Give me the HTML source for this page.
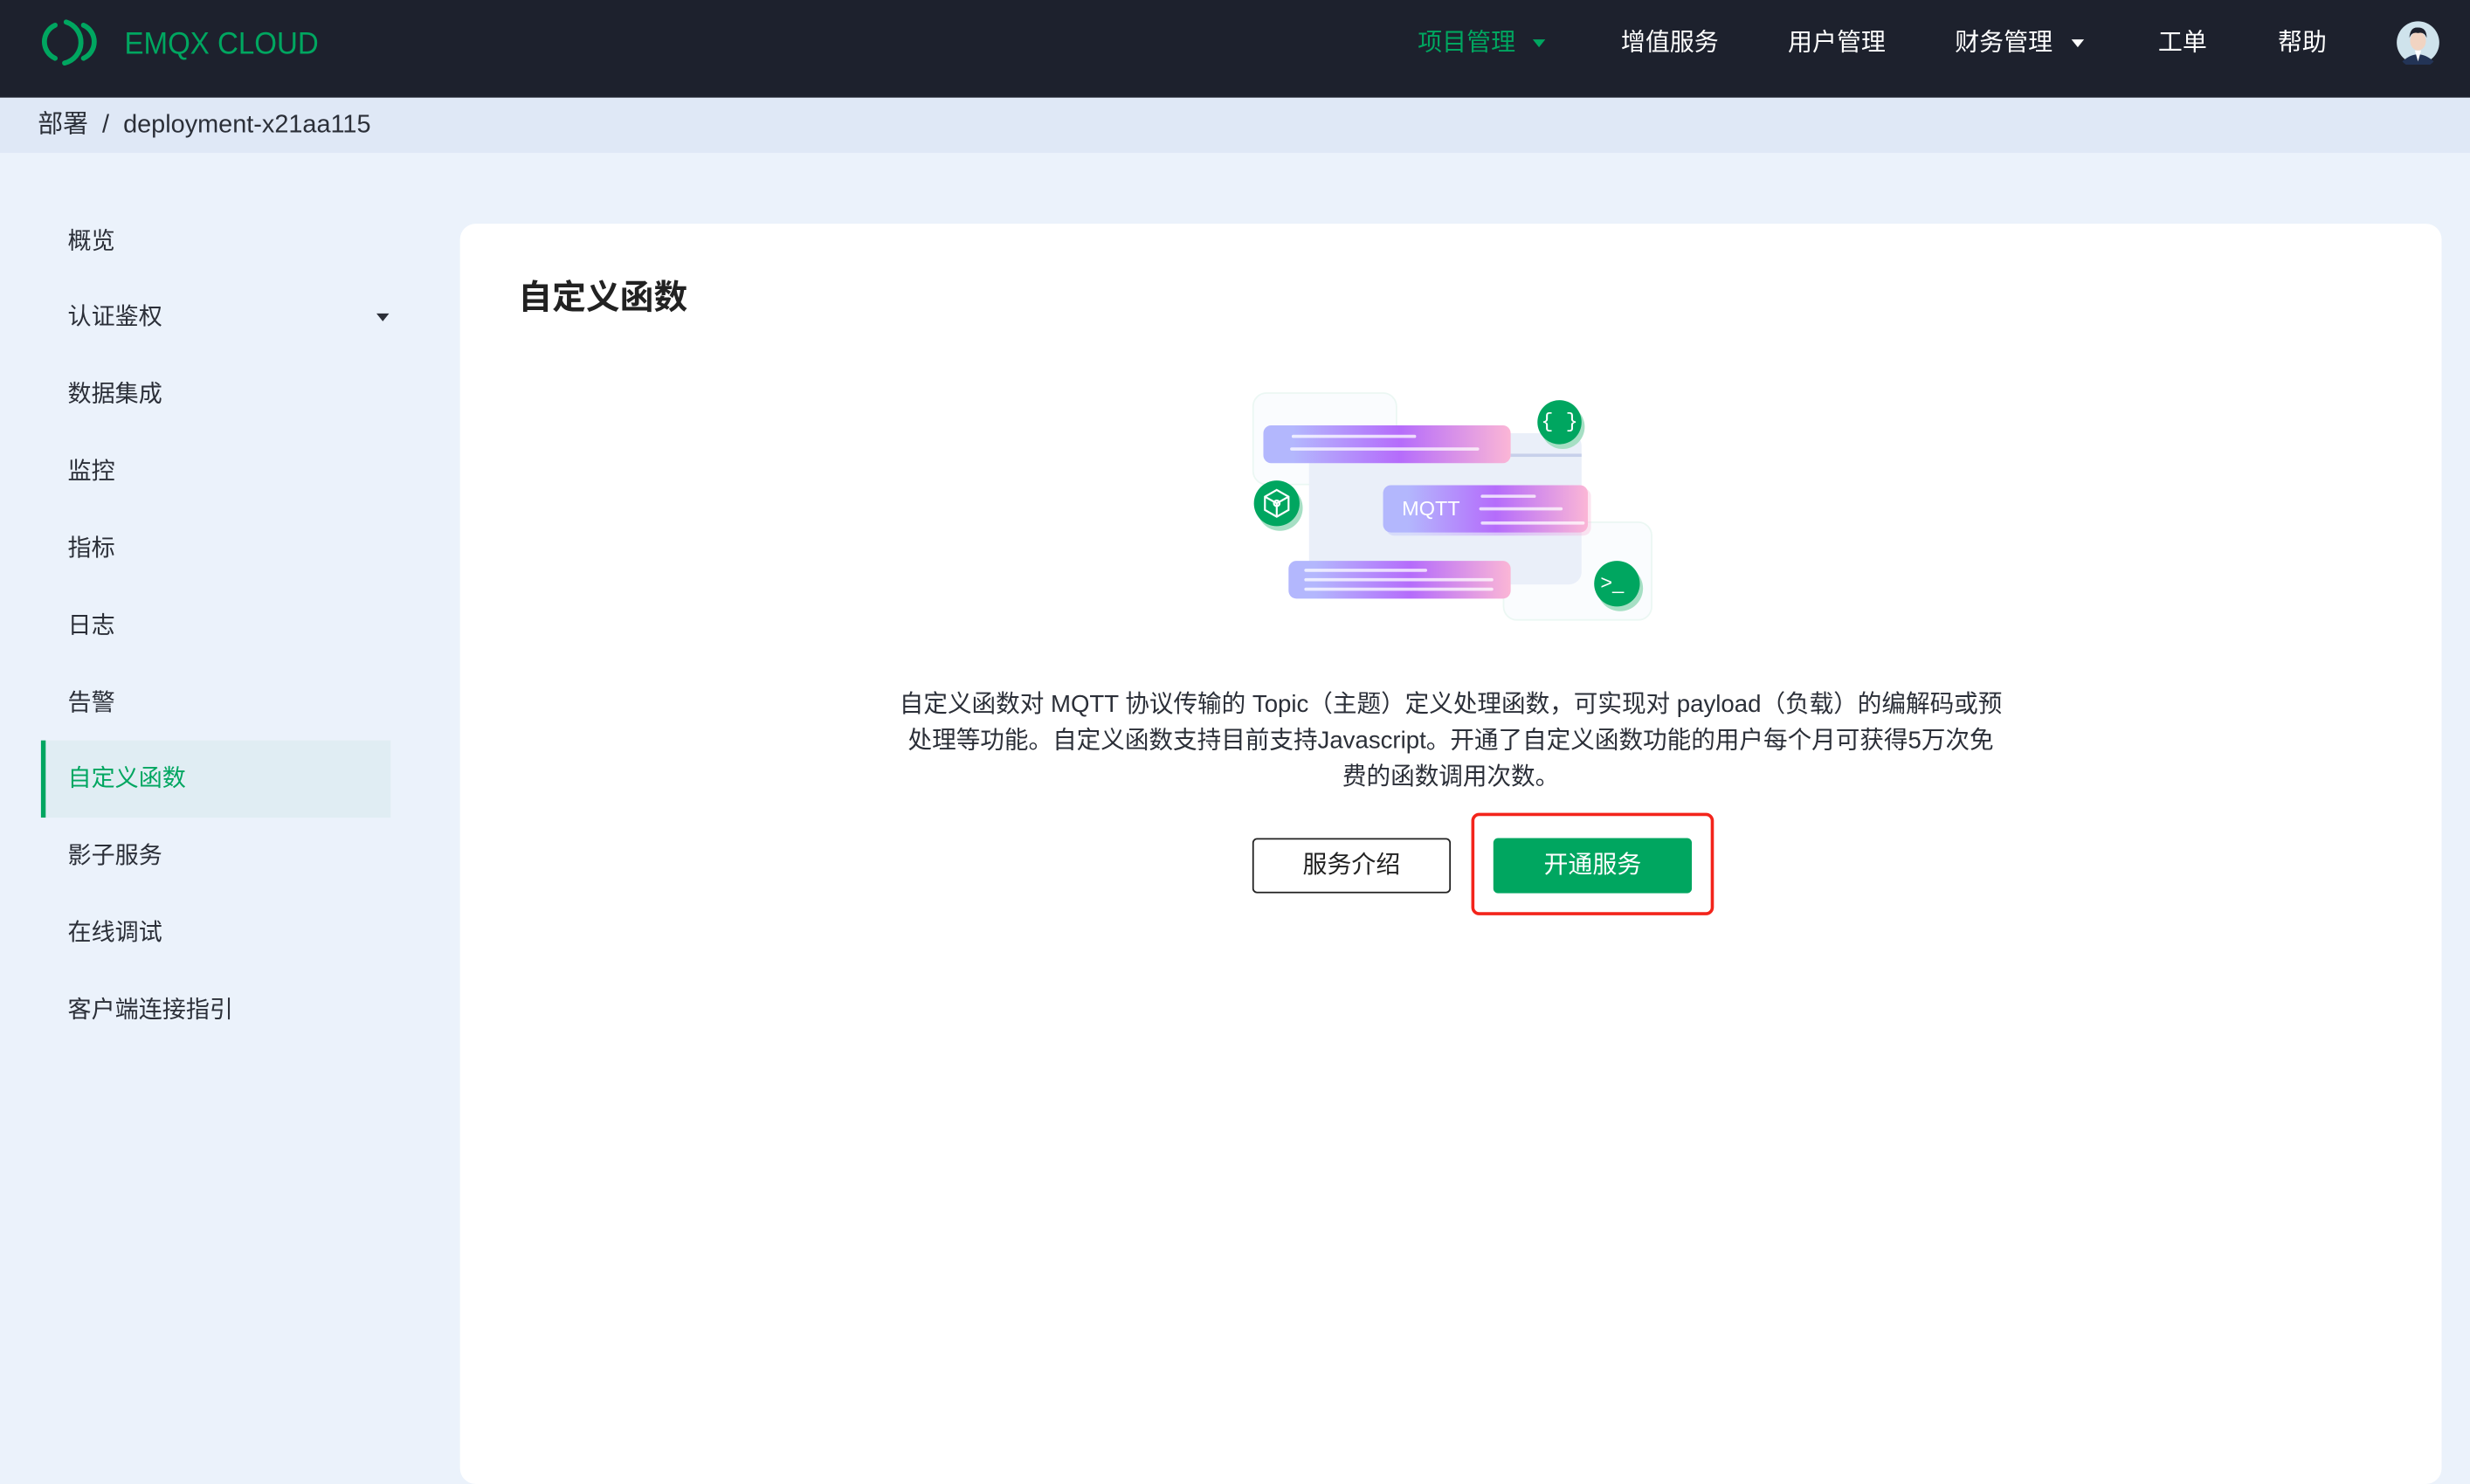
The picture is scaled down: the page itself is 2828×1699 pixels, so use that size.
<!DOCTYPE html>
<html><head><meta charset="utf-8">
<style>
html,body{margin:0;padding:0;width:2828px;height:1664px;overflow:hidden;background:#ebf2fb}
#w{position:absolute;left:0;top:0;width:1568px;height:923px;transform:scale(1.80357);transform-origin:0 0;font-family:"Liberation Sans","Noto Sans CJK SC",sans-serif;color:#222}
.a{position:absolute}
.hdr{left:0;top:0;width:1568px;height:62px;background:#1d212d}
.nav{top:17px;font-size:15.5px;color:#fff;white-space:nowrap;line-height:22px}
.crumb{left:0;top:62px;width:1568px;height:35px;background:#dfe8f6}
.si{left:43px;font-size:15px;color:#2b2f38;line-height:20px}
.tri{width:0;height:0;border-left:4.5px solid transparent;border-right:4.5px solid transparent;border-top:5px solid #fff}
.bar{border-radius:5px;background:linear-gradient(90deg,#b3b7fd 0%,#b3b7fd 12%,#b56cfb 55%,#fbb6d6 100%)}
.ln{height:2px;background:rgba(255,255,255,.75);border-radius:1px}
.circ{border-radius:50%;background:#00a660;box-shadow:2px 3px 0 #a6dfc4}
</style></head><body><div id="w">
<div class="a hdr"></div>
<svg class="a" style="left:22px;top:11px" width="48" height="32" viewBox="0 0 48 32">
<g fill="none" stroke="#00a660" stroke-width="3.2" stroke-linecap="round">
<path d="M13 5 A11.5 11.5 0 0 0 13 26"/>
<path d="M20 3 A13.5 13.5 0 0 1 19 29"/>
<path d="M31 5 A11.5 11.5 0 0 1 31 26"/>
</g></svg>
<div class="a" style="left:79px;top:16px;font-size:19.5px;color:#00a660;line-height:24px;transform:scaleX(.94);transform-origin:0 0">EMQX CLOUD</div>
<div class="a nav" style="left:900px;color:#00a660">项目管理</div>
<div class="a tri" style="left:973px;top:25px;border-top-color:#00a660"></div>
<div class="a nav" style="left:1029px">增值服务</div>
<div class="a nav" style="left:1135px">用户管理</div>
<div class="a nav" style="left:1241px">财务管理</div>
<div class="a tri" style="left:1315px;top:25px"></div>
<div class="a nav" style="left:1370px">工单</div>
<div class="a nav" style="left:1446px">帮助</div>
<svg class="a" style="left:1521px;top:13px" width="28" height="28" viewBox="0 0 28 28">
<circle cx="14" cy="14" r="13.5" fill="#cfe3ec"/>
<path d="M4 26 Q14 17 24 26 A13.5 13.5 0 0 1 4 26Z" fill="#233456"/>
<path d="M12 19 L14 26 L16 19Z" fill="#fff"/>
<ellipse cx="14" cy="13" rx="5" ry="6" fill="#f1d4c2"/>
<path d="M8.5 11 Q9 4 14 4.5 Q19.5 4.5 19.5 11 Q18 7 14 8 Q10 7 8.5 11Z" fill="#1d212d"/>
</svg>
<div class="a crumb"></div>
<div class="a" style="left:24px;top:70px;font-size:16px;color:#2b2f38;line-height:20px">部署 &nbsp;/ &nbsp;deployment-x21aa115</div>

<div class="a si" style="top:144px">概览</div>
<div class="a si" style="top:192px">认证鉴权</div>
<div class="a tri" style="left:239px;top:199px;border-top-color:#2b2f38"></div>
<div class="a si" style="top:241px">数据集成</div>
<div class="a si" style="top:290px">监控</div>
<div class="a si" style="top:339px">指标</div>
<div class="a si" style="top:388px">日志</div>
<div class="a si" style="top:437px">告警</div>
<div class="a" style="left:26px;top:470px;width:222px;height:49px;background:#e0edf3;border-left:3px solid #00a660;box-sizing:border-box"></div>
<div class="a si" style="top:485px;color:#00a660">自定义函数</div>
<div class="a si" style="top:534px">影子服务</div>
<div class="a si" style="top:583px">在线调试</div>
<div class="a si" style="top:632px">客户端连接指引</div>

<div class="a" style="left:292px;top:142px;width:1258px;height:800px;background:#fff;border-radius:10px"></div>
<div class="a" style="left:329px;top:176px;font-size:21.5px;font-weight:bold;color:#222;line-height:27px">自定义函数</div>

<div class="a" style="left:795px;top:249px;width:90px;height:57px;border:1.5px solid #ebf7f3;border-radius:9px;background:#fafcfe"></div>
<div class="a" style="left:954px;top:331px;width:93px;height:61px;border:1.5px solid #ebf7f3;border-radius:9px;background:#fafcfe"></div>
<div class="a" style="left:831px;top:275px;width:173px;height:96px;background:#eaeff9;border-radius:8px"></div>
<div class="a" style="left:959px;top:288px;width:45px;height:2px;background:#c7d0ea"></div>
<div class="a bar" style="left:802px;top:270px;width:157px;height:24px"></div>
<div class="a ln" style="left:820px;top:276px;width:79px"></div>
<div class="a ln" style="left:819px;top:284px;width:120px"></div>
<div class="a bar" style="left:880px;top:310px;width:130px;height:30px;opacity:.35"></div>
<div class="a bar" style="left:878px;top:308px;width:130px;height:30px"></div>
<div class="a" style="left:890px;top:315px;font-size:13px;color:#fff;line-height:16px">MQTT</div>
<div class="a ln" style="left:940px;top:314px;width:35px"></div>
<div class="a ln" style="left:939px;top:322px;width:53px"></div>
<div class="a ln" style="left:940px;top:331px;width:66px"></div>
<div class="a bar" style="left:818px;top:356px;width:141px;height:24px"></div>
<div class="a ln" style="left:828px;top:361px;width:78px"></div>
<div class="a ln" style="left:828px;top:367px;width:120px"></div>
<div class="a ln" style="left:828px;top:373px;width:120px"></div>
<div class="a circ" style="left:976px;top:254px;width:28px;height:28px;color:#fff;font-size:13px;line-height:27px;text-align:center;font-family:'Liberation Mono',monospace">{ }</div>
<div class="a circ" style="left:796px;top:305px;width:29px;height:29px"></div>
<svg class="a" style="left:800px;top:309px" width="21" height="21" viewBox="0 0 21 21"><g fill="none" stroke="#fff" stroke-width="1.2"><path d="M10.5 2 L18 6.3 V14.7 L10.5 19 L3 14.7 V6.3Z"/><path d="M3 6.3 L10.5 10.5 L18 6.3 M10.5 10.5 V19"/><circle cx="10.5" cy="10.5" r="1.8"/></g></svg>
<div class="a circ" style="left:1012px;top:356px;width:29px;height:29px"></div>
<div class="a" style="left:1016px;top:362px;font-size:13px;color:#fff;line-height:16px">&gt;_</div>

<div class="a" style="left:521px;top:436px;width:800px;text-align:center;font-size:15.3px;line-height:23px;color:#2b2f38">自定义函数对 MQTT 协议传输的 Topic（主题）定义处理函数，可实现对 payload（负载）的编解码或预<br>处理等功能。自定义函数支持目前支持Javascript。开通了自定义函数功能的用户每个月可获得5万次免<br>费的函数调用次数。</div>
<div class="a" style="left:795px;top:532px;width:126px;height:35px;border:1px solid #222;border-radius:3px;box-sizing:border-box;text-align:center;line-height:33px;font-size:15.5px;color:#222">服务介绍</div>
<div class="a" style="left:934px;top:516px;width:154px;height:65px;border:2px solid #f3241b;border-radius:5px;box-sizing:border-box"></div>
<div class="a" style="left:948px;top:532px;width:126px;height:35px;background:#00a660;border-radius:3px;text-align:center;line-height:35px;font-size:15.5px;color:#fff">开通服务</div>
</div></body></html>
